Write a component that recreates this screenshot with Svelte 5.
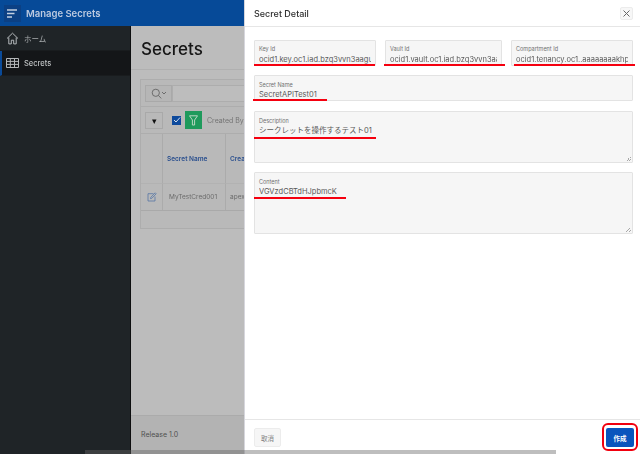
<script>
  const idFields = [
    { label: 'Key Id', value: 'ocid1.key.oc1.iad.bzq3vvn3aagu7aaaaaaa', left: -1, mark: 121 },
    { label: 'Vault Id', value: 'ocid1.vault.oc1.iad.bzq3vvn3aagu7aaaaaa', left: -2, mark: 121 },
    { label: 'Compartment Id', value: 'ocid1.tenancy.oc1..aaaaaaaakhp', left: 2, mark: 121 }
  ];
  const columns = ['Secret Name', 'Created By'];
</script>

<div class="page">
  <div class="app">
    <header class="topbar">
      <span class="burger">
        <svg width="11" height="9" viewBox="0 0 11 9"><path d="M0 1h10M0 4.500h7.500M0 8h5" stroke="#c3cfe0" stroke-width="1.300" fill="none" /></svg>
      </span>
      <span class="app-name">Manage Secrets</span>
    </header>
    <div class="body">
      <nav class="side">
        <div class="nav-item">
          <svg width="13" height="13" viewBox="0 0 13 13"><path d="M1 6.500 6.500 1.200 12 6.500M2.800 5.500v6.400h2.500V8.200h2.400v3.700h2.500V5.500" stroke="#b6babd" stroke-width="1" fill="none" /></svg>
          <span>ホーム</span>
        </div>
        <div class="nav-item current">
          <svg width="13" height="10" viewBox="0 0 13 10"><path d="M.5.500h12v9H.5zM.5 3.400h12M.5 6.400h12M4.300.5v9M8.500.5v9" stroke="#b4b7b9" stroke-width="1" fill="none" /></svg>
          <span>Secrets</span>
        </div>
      </nav>
      <main class="content">
        <h1>Secrets</h1>
        <div class="report">
          <div class="search">
            <span class="search-btn">
              <svg width="15" height="11" viewBox="0 0 15 11"><circle cx="4.800" cy="4.800" r="3.600" stroke="#6c6c6c" fill="none" /><path d="m7.400 7.400 2.800 3M11 4l2 2 2-2" stroke="#6c6c6c" fill="none" /></svg>
            </span>
            <span class="search-input"></span>
          </div>
          <div class="filters">
            <span class="caret">▾</span>
            <span class="check">
              <svg width="8" height="8" viewBox="0 0 8 8"><path d="m1 4 2 2 4-4.500" stroke="#d8e2ee" fill="none" /></svg>
            </span>
            <span class="funnel">
              <svg width="9" height="11" viewBox="0 0 9 11"><path d="M.5.800h8L5.600 5v5H3.400V5z" stroke="#b9d6c2" fill="none" /></svg>
            </span>
            <span class="filter-text">Created By = 'APEX'</span>
          </div>
          <div class="grid">
            <div class="cell icon-cell head"></div>
            {#each columns as col}
              <div class="cell head col">{col}</div>
            {/each}
            <div class="cell icon-cell">
              <svg width="10" height="10" viewBox="0 0 10 10"><path d="M6.500 1.700H1v7.300h7V4.500M3.800 5.300l-.3 1.300 1.300-.3L9.200 1.800 8.200.8z" stroke="#4a6ea3" stroke-width=".7" fill="none" /></svg>
            </div>
            <div class="cell row-text">MyTestCred001</div>
            <div class="cell">apexuser</div>
          </div>
          <div class="grid-foot"></div>
        </div>
        <footer class="release">Release 1.0</footer>
      </main>
    </div>
  </div>

  <section class="dialog">
    <div class="dialog-head">
      <span class="title">Secret Detail</span>
      <button class="close" aria-label="close">
        <svg width="7" height="7" viewBox="0 0 7 7"><path d="m.5.500 6 6M6.500.500l-6 6" stroke="#666" fill="none" /></svg>
      </button>
    </div>
    <div class="form">
      <div class="id-row">
        {#each idFields as f}
          <div class="field short">
            <span class="label">{f.label}</span>
            <div class="value">{f.value}</div>
            <i class="mark" style="left: {f.left}px; width: {f.mark}px"></i>
          </div>
        {/each}
      </div>
      <div class="field short lower">
        <span class="label">Secret Name</span>
        <div class="value">SecretAPITest01</div>
        <i class="mark" style="left: -2px; width: 74px"></i>
      </div>
      <div class="field desc lower">
        <span class="label">Description</span>
        <div class="value">シークレットを操作するテスト01</div>
        <i class="mark under-text" style="width: 122px"></i>
        <i class="grip"></i>
      </div>
      <div class="field cont lower">
        <span class="label">Content</span>
        <div class="value">VGVzdCBTdHJpbmcK</div>
        <i class="mark under-text" style="width: 92px"></i>
        <i class="grip"></i>
      </div>
    </div>
    <div class="dialog-foot">
      <button class="cancel">取消</button>
      <button class="create">作成</button>
    </div>
  </section>
  <div class="scrollbar"></div>
</div>

<style>
  :global(body) {
    margin: 0;
  }

  .page {
    position: relative;
    display: flex;
    width: 640px;
    height: 454px;
    overflow: hidden;
    font-family: Inter, "Noto Sans CJK JP", sans-serif;
    color: #333;
    filter: blur(0.35px);
  }

  /* dimmed page behind the dialog */
  .app {
    width: 245px;
    flex: none;
    display: flex;
    flex-direction: column;
  }

  .topbar {
    height: 26px;
    flex: none;
    display: flex;
    align-items: center;
    background: #064a98;
    box-sizing: border-box;
    padding-left: 4px;
  }

  .burger {
    width: 17px;
    height: 17px;
    background: #0b4084;
    display: flex;
    align-items: center;
    justify-content: center;
  }

  .app-name {
    margin-left: 5px;
    font-size: 9.500px;
    font-weight: 600;
    color: #bccae0;
  }

  .body {
    flex: 1;
    display: flex;
    min-height: 0;
  }

  .side {
    width: 131px;
    flex: none;
    background: #1f2427;
    border-right: 1px solid #0d0e0f;
    box-sizing: border-box;
  }

  .nav-item {
    height: 25px;
    display: flex;
    align-items: center;
    gap: 5px;
    padding-left: 6px;
    font-size: 7.500px;
    color: #a9adaf;
    border-bottom: 1px solid #191c1e;
    box-sizing: border-box;
  }

  .current {
    background: #141618;
    border-left: 2px solid #0a4a98;
    padding-left: 4px;
    color: #bfc2c3;
    font-weight: 500;
  }

  .content {
    flex: 1;
    min-width: 0;
    position: relative;
    background: #bcbcbc;
    overflow: hidden;
    display: flex;
    flex-direction: column;
  }

  h1 {
    margin: 0;
    height: 44px;
    flex: none;
    box-sizing: border-box;
    padding: 13px 0 0 10px;
    font-size: 17px;
    line-height: 20px;
    font-weight: 500;
    color: #161616;
    border-bottom: 1px solid #b0b0b0;
  }

  .report {
    margin: 9px 0 0 9px;
    width: 105px;
    height: 150px;
    flex: none;
    box-sizing: border-box;
    background: #b9b9b9;
    border: 1px solid #adadad;
    border-right: 0;
    overflow: hidden;
  }

  .search {
    height: 27px;
    display: flex;
    align-items: center;
    padding-left: 4px;
    box-sizing: border-box;
    border-bottom: 1px solid #adadad;
  }

  .search-btn {
    width: 27px;
    height: 17px;
    flex: none;
    display: flex;
    align-items: center;
    justify-content: center;
    background: #b6b6b6;
    border: 1px solid #a9a9a9;
    box-sizing: border-box;
  }

  .search-input {
    flex: 1;
    height: 17px;
    background: #bdbdbd;
    border: 1px solid #adadad;
    box-sizing: border-box;
  }

  .filters {
    height: 27px;
    display: flex;
    align-items: center;
    padding-left: 4px;
    box-sizing: border-box;
    border-bottom: 1px solid #adadad;
    white-space: nowrap;
    font-size: 7px;
    color: #747474;
  }

  .caret {
    width: 18px;
    height: 17px;
    flex: none;
    box-sizing: border-box;
    border: 1px solid #a9a9a9;
    text-align: center;
    line-height: 15px;
    font-size: 9px;
    color: #111;
  }

  .check {
    width: 9px;
    height: 9px;
    margin-left: 9px;
    flex: none;
    background: #0e4a9c;
    display: flex;
    align-items: center;
    justify-content: center;
  }

  .funnel {
    width: 17px;
    height: 18px;
    margin-left: 4px;
    flex: none;
    background: #1f9a5c;
    display: flex;
    align-items: center;
    justify-content: center;
  }

  .filter-text {
    margin-left: 5px;
  }

  .grid {
    display: grid;
    grid-template-columns: 22px 63px 60px;
    grid-template-rows: 50px 26px;
    font-size: 6.500px;
    color: #6a6a6a;
    border-bottom: 1px solid #a9a9a9;
  }

  .cell {
    display: flex;
    align-items: center;
    padding-left: 4px;
    border-right: 1px solid #ababab;
    white-space: nowrap;
    overflow: hidden;
  }

  .head {
    border-bottom: 1px solid #b2b2b2;
  }

  .col {
    color: #2a4f8e;
    font-weight: 600;
  }

  .row-text {
    padding-left: 6px;
  }

  .icon-cell {
    justify-content: center;
    padding-left: 0;
  }

  .release {
    margin-top: auto;
    height: 39px;
    flex: none;
    box-sizing: border-box;
    padding: 13px 0 0 10px;
    background: #b3b3b3;
    border-top: 1px solid #ababab;
    font-size: 7px;
    line-height: 12px;
    color: #505050;
  }

  /* dialog */
  .dialog {
    position: relative;
    flex: 1;
    min-width: 0;
    display: flex;
    flex-direction: column;
    background: #fff;
    box-shadow: -1px 0 0 #d6d6dc;
  }

  .dialog-head {
    height: 27px;
    flex: none;
    box-sizing: border-box;
    display: flex;
    align-items: center;
    justify-content: space-between;
    padding: 0 7px 0 9px;
    border-bottom: 1px solid #e6e6e6;
  }

  .title {
    font-size: 9px;
    font-weight: 500;
    color: #303030;
  }

  button {
    font-family: inherit;
    padding: 0;
    box-sizing: border-box;
    cursor: pointer;
  }

  .close {
    width: 13px;
    height: 13px;
    border: 1px solid #ececec;
    border-radius: 2px;
    background: #f7f7f7;
    display: flex;
    align-items: center;
    justify-content: center;
  }

  .form {
    flex: 1;
    display: flex;
    flex-direction: column;
    gap: 9px;
    padding: 13px 7px 0 9px;
  }

  .id-row {
    display: grid;
    grid-template-columns: 122px 117px 122px;
    gap: 9px;
  }

  .field {
    position: relative;
    box-sizing: border-box;
    background: #f6f6f6;
    border: 1px solid #e3e3e3;
    border-radius: 1px;
    padding: 4px 4px 0;
    min-width: 0;
  }

  .short {
    height: 26px;
  }

  .desc {
    height: 52px;
    margin-top: 1px;
  }

  .cont {
    height: 62px;
  }

  .label {
    display: block;
    font-size: 5.500px;
    line-height: 8px;
    color: #707070;
  }

  .lower .label {
    margin-top: 1px;
  }

  .value {
    font-size: 7.500px;
    line-height: 11px;
    margin-top: 1px;
    color: #5a5a5a;
    white-space: nowrap;
    overflow: hidden;
  }

  .lower .value {
    margin-top: 0;
  }

  /* red annotation lines drawn over the screenshot */
  .mark {
    position: absolute;
    left: -1px;
    bottom: -1px;
    height: 2px;
    background: #f5000f;
  }

  .mark.under-text {
    bottom: auto;
    top: 25px;
  }

  .cont .mark.under-text {
    top: 24px;
  }

  .grip {
    position: absolute;
    right: 1px;
    bottom: 1px;
    width: 5px;
    height: 5px;
    background: linear-gradient(135deg, transparent 50%, #a8a8a8 50%, #a8a8a8 60%, transparent 60%, transparent 75%, #a8a8a8 75%, #a8a8a8 85%, transparent 85%);
  }

  .dialog-foot {
    height: 35px;
    flex: none;
    box-sizing: border-box;
    display: flex;
    align-items: flex-start;
    justify-content: space-between;
    padding: 8px 6px 0 9px;
    border-top: 1px solid #e6e6e6;
  }

  .cancel,
  .create {
    position: relative;
    height: 19px;
    font-size: 6.500px;
    border-radius: 2px;
  }

  .cancel {
    width: 27px;
    background: #f6f6f6;
    border: 1px solid #ececec;
    color: #808080;
  }

  .create {
    width: 28px;
    background: #0a55bd;
    border: 0;
    color: #fff;
    font-weight: 700;
  }

  .create::after {
    content: "";
    position: absolute;
    inset: -5px -4px -4px -4px;
    border: 2px solid #f1000e;
    border-radius: 6px;
  }

  .scrollbar {
    position: absolute;
    left: 85px;
    bottom: 0;
    width: 471px;
    height: 4px;
    background: rgba(100, 100, 100, 0.42);
  }
</style>
